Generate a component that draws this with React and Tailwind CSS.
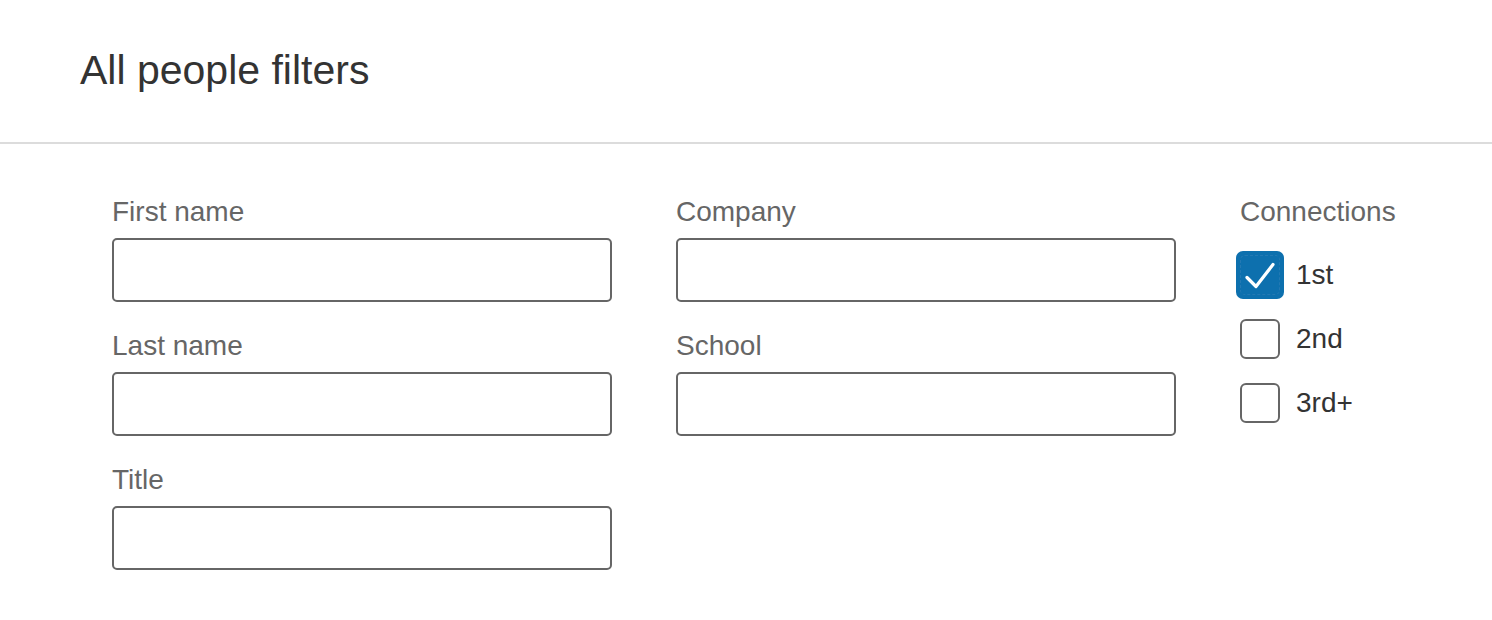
const font = { fontFamily: '"Liberation Sans", Arial, Helvetica, sans-serif' };

function Field({ label }) {
  return (
    <div className="flex flex-col">
      <label className="text-[28px] leading-[36px] text-[#666666]">{label}</label>
      <input
        type="text"
        className="mt-2 h-[64px] w-full rounded-[5px] border-2 border-[#666666] bg-white px-3 text-[28px] outline-none"
      />
    </div>
  );
}

function Check({ label, checked }) {
  return (
    <div className="flex h-[40px] items-center">
      {checked ? (
        <div className="-m-1 flex h-[48px] w-[48px] shrink-0 items-center justify-center rounded-[7px] bg-[#0d70ae]">
          <div className="relative h-[40px] w-[40px] rounded-[5px] border border-dashed border-[#2379b3]">
            <svg viewBox="0 0 48 48" className="absolute -left-[5px] -top-[5px] h-[48px] w-[48px]">
              <path
                d="M11 26.5 L20 35.5 L37 13.5"
                fill="none"
                stroke="#ffffff"
                strokeWidth="3.2"
                strokeLinecap="round"
                strokeLinejoin="round"
              />
            </svg>
          </div>
        </div>
      ) : (
        <div className="h-[40px] w-[40px] shrink-0 rounded-[6px] border-2 border-[#666666] bg-white" />
      )}
      <span className="ml-4 text-[28px] leading-[36px] text-[#333333]">{label}</span>
    </div>
  );
}

export default function App() {
  return (
    <div className="h-[620px] w-full bg-white" style={font}>
      <div className="flex h-[144px] items-center border-b-2 border-[#dcdcdc] pl-[80px] pb-[2px]">
        <h1 className="text-[41px] leading-[48px] text-[#333333]">All people filters</h1>
      </div>
      <div className="flex gap-[64px] pl-[112px] pt-[50px]">
        <div className="flex w-[500px] flex-col gap-[26px]">
          <Field label="First name" />
          <Field label="Last name" />
          <Field label="Title" />
        </div>
        <div className="flex w-[500px] flex-col gap-[26px]">
          <Field label="Company" />
          <Field label="School" />
        </div>
        <div className="flex flex-col">
          <span className="text-[28px] leading-[36px] text-[#666666]">Connections</span>
          <div className="mt-[25px] flex flex-col gap-[24px]">
            <Check label="1st" checked />
            <Check label="2nd" />
            <Check label="3rd+" />
          </div>
        </div>
      </div>
    </div>
  );
}
